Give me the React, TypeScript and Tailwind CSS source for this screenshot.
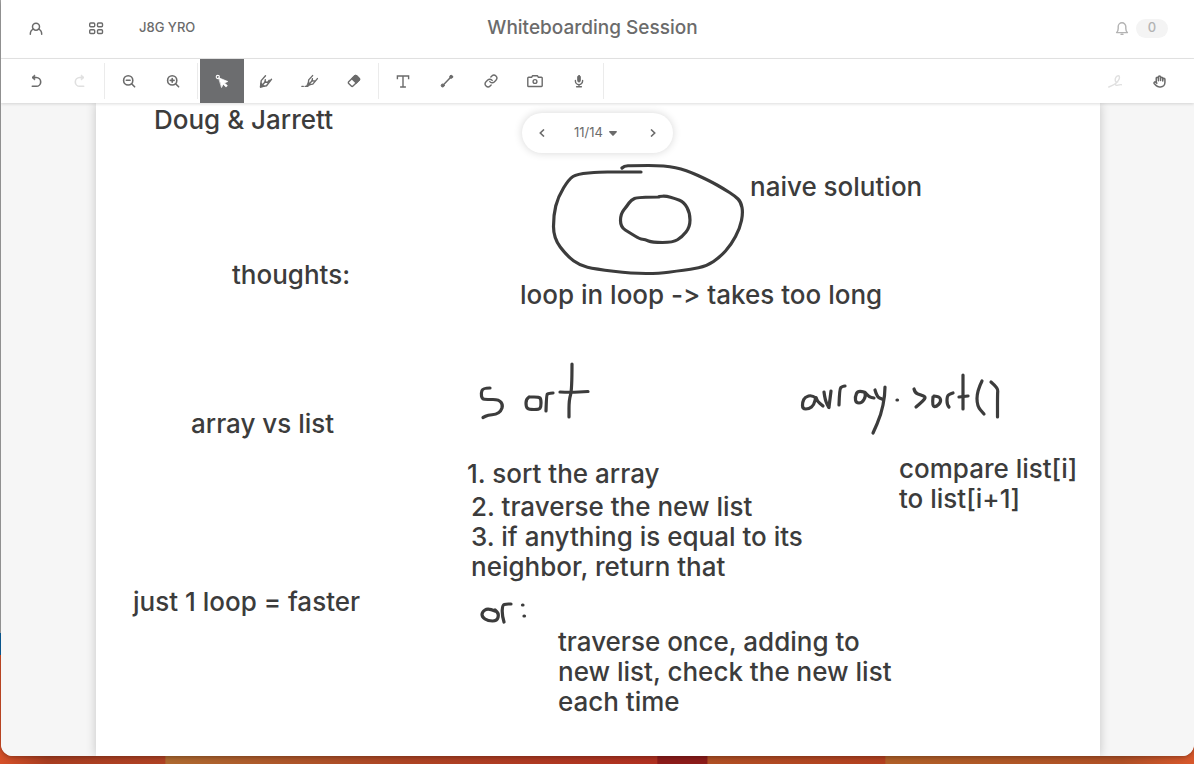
import type { ReactNode } from "react";
import { Hand, Link } from "lucide-react";

function Icon({ children, width = 1.5 }: { children: ReactNode; width?: number }) {
  return (
    <svg
      className="size-5"
      viewBox="0 0 20 20"
      fill="none"
      stroke="currentColor"
      strokeWidth={width}
      strokeLinecap="round"
      strokeLinejoin="round"
      aria-hidden="true"
    >
      {children}
    </svg>
  );
}

function Tool({
  label,
  active = false,
  disabled = false,
  children,
}: {
  label: string;
  active?: boolean;
  disabled?: boolean;
  children: ReactNode;
}) {
  const tone = active ? "bg-[#6c6d6f] text-white" : disabled ? "text-[#e0e0e0]" : "text-[#6b6b6b]";
  return (
    <button
      type="button"
      aria-label={label}
      aria-pressed={active}
      disabled={disabled}
      className={`flex size-11 shrink-0 items-center justify-center ${tone}`}
    >
      {children}
    </button>
  );
}

function Separator() {
  return <div className="mx-0.5 h-9 w-px shrink-0 bg-[#ebebeb]" />;
}

/** Joins sampled pen points through their midpoints, which rounds the corners. */
function smooth(points: number[][]) {
  const last = points[points.length - 1];
  let d = `M${points[0][0]} ${points[0][1]}`;
  for (let i = 1; i < points.length - 1; i++) {
    const [x, y] = points[i];
    const [nx, ny] = points[i + 1];
    d += `Q${x} ${y} ${(x + nx) / 2} ${(y + ny) / 2}`;
  }
  return `${d}L${last[0]} ${last[1]}`;
}

const strokes: number[][][] = [
  // outer loop
  [[622, 168], [624, 166], [632, 165.5], [665, 165.5], [686, 170], [710, 181], [724, 189], [735, 196], [741, 202], [743, 213], [740, 228], [731, 245], [720, 257], [707, 266], [690, 269.5], [677, 271], [660, 273.5], [632, 273.5], [595, 269], [580, 265.5], [567, 256], [553.5, 238], [553.5, 215], [558, 197], [569, 179], [577, 174], [600, 172], [615, 172], [641, 172]],
  // inner loop
  [[659, 197], [638, 197], [631, 200], [627, 206], [620.5, 214], [620.5, 227], [630, 233], [640, 239], [645, 239.5], [652, 242.5], [673, 242.5], [682, 237], [690, 227], [690, 213], [684, 202], [675, 198.5], [666, 196], [659, 196.5]],
  // "sort"
  [[490, 388], [483, 388], [481, 393], [482, 399], [487, 399.5], [499, 399.5], [503, 405], [501, 411], [496, 414.5], [488, 415], [483, 417.5]],
  [[529, 397], [526, 399], [526, 407], [529, 409.5], [539, 409.5], [541, 407], [541, 399], [539, 397], [529, 397]],
  [[546, 411], [546.5, 395], [548, 393.5], [553, 393]],
  [[572, 364], [572, 390], [569, 400], [569, 417]],
  [[560, 392], [570, 392.5], [588, 391.5]],
  // "array.sort()"
  [[816, 398], [812, 395], [805, 397], [802.5, 402], [802.5, 409], [809, 409], [814, 405], [816, 396], [817, 401], [823, 406]],
  [[824, 392], [825, 400], [829, 408], [829, 407], [831, 391]],
  [[839, 405], [839.5, 389], [842, 386.5], [845, 386]],
  [[864, 392], [858, 390], [855, 397], [856, 403], [862, 403], [866, 396], [864, 391], [869, 397], [874, 398]],
  [[875, 390], [877, 397], [882, 399]],
  [[885, 387], [885, 395], [881, 415], [873, 433]],
  [[897, 400], [897.5, 400]],
  [[914, 389], [915, 393], [921, 395], [926, 397], [923, 401], [916, 407]],
  [[933, 397], [932, 406], [936, 407], [941, 402], [940, 397], [934, 396]],
  [[949, 407], [947, 405], [947, 396], [950, 394], [953, 393]],
  [[963, 375], [963, 409]],
  [[959, 397], [968, 396]],
  [[982, 381], [977, 391], [977, 406], [984, 414]],
  [[991, 382], [998, 388], [997.5, 394], [997.5, 417]],
  // "or:"
  [[495, 611], [488, 608], [482, 612], [482, 617], [488, 621], [497, 621], [499, 614], [495, 610]],
  [[504, 622], [502, 615], [502.5, 605], [506, 604], [511, 604]],
  [[522.5, 605], [523, 605]],
  [[524, 616], [524.5, 616]],
];

const notes = [
  { place: "left-[58px] top-[2px]", lines: ["Doug & Jarrett"] },
  { place: "left-[654px] top-[69px]", lines: ["naive solution"] },
  { place: "left-[136px] top-[157px]", lines: ["thoughts:"] },
  { place: "left-[424px] top-[177px]", lines: ["loop in loop -> takes too long"] },
  { place: "left-[95px] top-[306px]", lines: ["array vs list"] },
  { place: "left-[371px] top-[356px]", lines: ["1. sort the array"] },
  {
    place: "left-[375px] top-[389px]",
    lines: ["2. traverse the new list", "3. if anything is equal to its", "neighbor, return that"],
  },
  { place: "left-[803px] top-[351px]", lines: ["compare list[i]", "to list[i+1]"] },
  { place: "left-[37px] top-[484px]", lines: ["just 1 loop = faster"] },
  {
    place: "left-[462px] top-[524px]",
    lines: ["traverse once, adding to", "new list, check the new list", "each time"],
  },
];

function Header() {
  return (
    <header className="grid grid-cols-[1fr_auto_1fr] items-center border-b border-[#e6e6e6] bg-white pb-0.5 text-[#6b6b6b]">
      <div className="flex items-center pl-[13px]">
        <button type="button" aria-label="Account" className="flex h-14 w-11 items-center justify-center">
          <Icon>
            <circle cx="10" cy="8.8" r="3.5" />
            <path d="M4.300 16.200c0-2.900 1.400-4.500 3.400-5.100M15.700 16.200c0-2.900-1.400-4.500-3.400-5.100" />
          </Icon>
        </button>
        <button type="button" aria-label="Boards" className="ml-4 flex h-14 w-11 items-center justify-center">
          <Icon width={1.4}>
            <rect x="3.7" y="5" width="5" height="3.8" rx="1" />
            <rect x="11.5" y="5" width="5" height="3.8" rx="1" />
            <rect x="3.7" y="11.7" width="5" height="3.8" rx="1" />
            <rect x="11.5" y="11.7" width="5" height="3.8" rx="1" />
          </Icon>
        </button>
        <span className="ml-[21px] text-[13px] font-medium">J8G YRO</span>
      </div>
      <h1 className="pr-2.5 text-[19px] font-medium leading-6">Whiteboarding Session</h1>
      <div className="flex items-center justify-end gap-1 pr-[26px] text-[#b3b3b3]">
        <button type="button" aria-label="Notifications" className="flex h-14 items-center">
          <Icon width={1.4}>
            <path d="M4.6 14.6c1.3-1.3 1.6-2.2 1.6-4.2V8.6a3.8 3.8 0 0 1 7.6 0v1.800c0 2 .3 2.900 1.6 4.200z" />
            <path d="M9 16.2h2" />
          </Icon>
        </button>
        <span className="flex h-[19px] w-8 items-center justify-center rounded-full bg-[#f4f4f4] text-[13px] font-medium">
          0
        </span>
      </div>
    </header>
  );
}

function Toolbar() {
  return (
    <div
      role="toolbar"
      aria-label="Drawing tools"
      className="relative z-10 flex items-center bg-white px-[13px] shadow-[0_1px_3px_rgba(0,0,0,0.14)]"
    >
      <Tool label="Undo">
        <Icon width={1.6}>
          <path d="M7 6.500h3.300a4.400 4.400 0 0 1 0 8.800H6.300" />
          <path d="M8.400 4.300 6 6.500l2.400 2.200z" fill="currentColor" strokeWidth="1" />
        </Icon>
      </Tool>
      <Tool label="Redo" disabled>
        <Icon width={1.6}>
          <path d="M13 6.500H9.700a4.400 4.400 0 0 0 0 8.800h4" />
          <path d="M11.600 4.300 14 6.500l-2.400 2.200z" fill="currentColor" strokeWidth="1" />
        </Icon>
      </Tool>
      <Separator />
      <Tool label="Zoom out">
        <Icon width={1.6}>
          <circle cx="9.2" cy="9.4" r="4.6" />
          <path d="m12.6 12.8 3 3M7.3 9.2h3.8" />
        </Icon>
      </Tool>
      <Tool label="Zoom in">
        <Icon width={1.6}>
          <circle cx="9.2" cy="9.4" r="4.6" />
          <path d="m12.6 12.8 3 3M7.3 9.4h3.8M9.2 7.5v3.8" />
        </Icon>
      </Tool>
      <Separator />
      <Tool label="Select" active>
        <Icon width={1}>
          <circle cx="5.8" cy="6" r="1.6" strokeWidth="1.1" />
          <path d="m6.8 6.8 9 3.7-3.4 1.5 3 2.6-1.4 1.5-2.8-2.9-1.5 3z" fill="currentColor" strokeWidth=".7" />
        </Icon>
      </Tool>
      <Tool label="Pen">
        <Icon width={1.4}>
          <path d="M9.5 4.800 5.200 9.600 4.500 15.900l6-1.200 5-6.400" />
          <path d="m4.500 15.900 5-5.300" />
          <path d="M9.300 8.600 9 11.200l2.700.1 1.600-2" />
          <path d="M4.500 15.900 5 11.800l3.400 3.200z" fill="currentColor" strokeWidth=".8" />
        </Icon>
      </Tool>
      <Tool label="Marker">
        <Icon width={1.4}>
          <path d="M12.600 4.600 8.700 8.900 8.200 13.900l4.600-.8 4.600-5.500" />
          <path d="m8.200 13.900 4.200-4.400" />
          <path d="m12.400 7.700-.3 2.200 2.400.1" />
          <path d="m8.300 11.400-2 4 4.200-1.700z" fill="currentColor" strokeWidth=".8" />
          <path d="M1.800 15.400h1.600M5 15.400h3" strokeWidth="1.1" />
        </Icon>
      </Tool>
      <Tool label="Eraser">
        <Icon width={1.4}>
          <path d="m10.8 4.8-6.1 6a1.2 1.2 0 0 0 0 1.7l2.6 2.6a1.2 1.2 0 0 0 1.7 0l6.2-6a1.2 1.2 0 0 0 0-1.7l-2.7-2.6a1.2 1.2 0 0 0-1.7 0z" />
          <path d="m10.8 4.8-2.9 2.9 4.4 4.3 2.9-2.9a1.2 1.2 0 0 0 0-1.7l-2.7-2.6a1.2 1.2 0 0 0-1.7 0z" fill="currentColor" />
        </Icon>
      </Tool>
      <Separator />
      <Tool label="Text">
        <Icon width={1.4}>
          <path d="M4.4 7.5V5h11.2v2.5M10 5v11M7.8 16h4.4" strokeLinecap="square" strokeLinejoin="miter" />
        </Icon>
      </Tool>
      <Tool label="Line">
        <Icon width={1.5}>
          <path d="m5.8 14.4 8.6-8.8" />
          <circle cx="5.7" cy="14.5" r="1.5" fill="currentColor" strokeWidth="1" />
          <circle cx="14.2" cy="5.8" r="1.5" fill="currentColor" strokeWidth="1" />
        </Icon>
      </Tool>
      <Tool label="Link">
        <Link className="size-[14px]" strokeWidth={2.4} aria-hidden="true" />
      </Tool>
      <Tool label="Camera">
        <Icon width={1.4}>
          <path d="M3.6 6.3h3l1-1.6h4.8l1 1.6h3a.8.8 0 0 1 .8.8v7.6a.8.8 0 0 1-.8.8H3.6a.8.8 0 0 1-.8-.8V7.1a.8.8 0 0 1 .8-.8z" />
          <circle cx="10" cy="10.5" r="1.9" />
        </Icon>
      </Tool>
      <Tool label="Microphone">
        <Icon width={1.4}>
          <rect x="8.7" y="4.6" width="2.6" height="6.4" rx="1.3" fill="currentColor" strokeWidth="1" />
          <path d="M6.4 9.4v.6a3.6 3.6 0 0 0 7.2 0v-.6M10 13.6v2M7.6 15.7h4.8" />
        </Icon>
      </Tool>
      <Separator />
      <div className="ml-auto flex">
        <Tool label="Laser trail" disabled>
          <Icon width={1.4}>
            <path d="M3.800 16c3.600-1.200 7.600-3.600 9.600-6.600 1.500-2.300 1.400-4.600 0-4.700-1.900-.1-3.400 2.500-3.200 4.600.1 1.500 1.200 2 2.500 1.600-1.600.6-2.700 2.200-1.900 3.200 1 1.200 2.600-.8 5.600-.4" />
          </Icon>
        </Tool>
        <Tool label="Pan">
          <Hand className="size-[13px]" strokeWidth={2.8} aria-hidden="true" />
        </Tool>
      </div>
    </div>
  );
}

function Pager() {
  return (
    <nav
      aria-label="Pages"
      className="absolute left-[426px] top-[10px] flex h-10 w-[151px] items-center justify-between rounded-full bg-white px-3 text-[#6b6b6b] shadow-[0_0_8px_rgba(0,0,0,0.16)]"
    >
      <button type="button" aria-label="Previous page" className="flex size-4 items-center justify-center">
        <svg className="size-2" viewBox="0 0 8 8" fill="none" stroke="currentColor" strokeWidth="1.6">
          <path d="M6 .5 2.3 4 6 7.5" />
        </svg>
      </button>
      <button type="button" className="flex items-center gap-1.5 pr-1 text-[13px]">
        11/14
        <svg className="h-[5px] w-2" viewBox="0 0 8 5" fill="currentColor" aria-hidden="true">
          <path d="M.8 0h6.400c.7 0 1 .7.5 1.200L4.600 4.600c-.3.4-.9.4-1.200 0L.3 1.200C-.2.700.1 0 .8 0z" />
        </svg>
      </button>
      <button type="button" aria-label="Next page" className="flex size-4 items-center justify-center">
        <svg className="size-2" viewBox="0 0 8 8" fill="none" stroke="currentColor" strokeWidth="1.6">
          <path d="M2 .5 5.700 4 2 7.500" />
        </svg>
      </button>
    </nav>
  );
}

function Board() {
  return (
    <main className="flex grow overflow-hidden bg-[#f6f6f6] pl-[95px] pr-[94px]">
      <div className="relative grow bg-white shadow-[0_0_10px_rgba(0,0,0,0.2)]">
        <svg
          className="absolute left-0 top-0 h-[653px] w-[1004px]"
          viewBox="96 103 1004 653"
          fill="none"
          stroke="#3c3c3c"
          strokeWidth="3.2"
          strokeLinecap="round"
          strokeLinejoin="round"
          role="img"
          aria-label="Pen drawings"
        >
          {strokes.map((points, i) => (
            <path key={i} d={smooth(points)} />
          ))}
        </svg>
        {notes.map((note) => (
          <p
            key={note.lines[0]}
            className={`absolute whitespace-nowrap text-[26px] font-medium leading-[30px] text-[#3c3c3c] [font-feature-settings:'calt'_0] ${note.place}`}
          >
            {note.lines.map((line) => (
              <span key={line} className="block">
                {line}
              </span>
            ))}
          </p>
        ))}
        <Pager />
      </div>
    </main>
  );
}

export default function App() {
  return (
    <div className="relative flex h-screen flex-col overflow-hidden bg-[linear-gradient(90deg,#d65028_0%,#a83d20_4%,#b04224_13.8%,#ae6a30_13.9%,#ae4424_34%,#b03020_55%,#8c1c1a_55.1%,#8c1c1a_59.2%,#b05024_59.3%,#b44020_74.1%,#b06028_74.2%,#b05026_94%,#d8582c_100%)] pb-2 pl-px font-[Inter,'Liberation_Sans',sans-serif]">
      <div className="absolute bottom-[109px] left-0 top-0 w-px bg-[linear-gradient(#a9a9a9_0_96.6%,#0a64a4_96.6%)]" />
      <div className="relative flex grow flex-col overflow-hidden rounded-b-xl bg-white shadow-[0_1px_5px_rgba(0,0,0,0.35)]">
        <Header />
        <Toolbar />
        <Board />
      </div>
    </div>
  );
}
